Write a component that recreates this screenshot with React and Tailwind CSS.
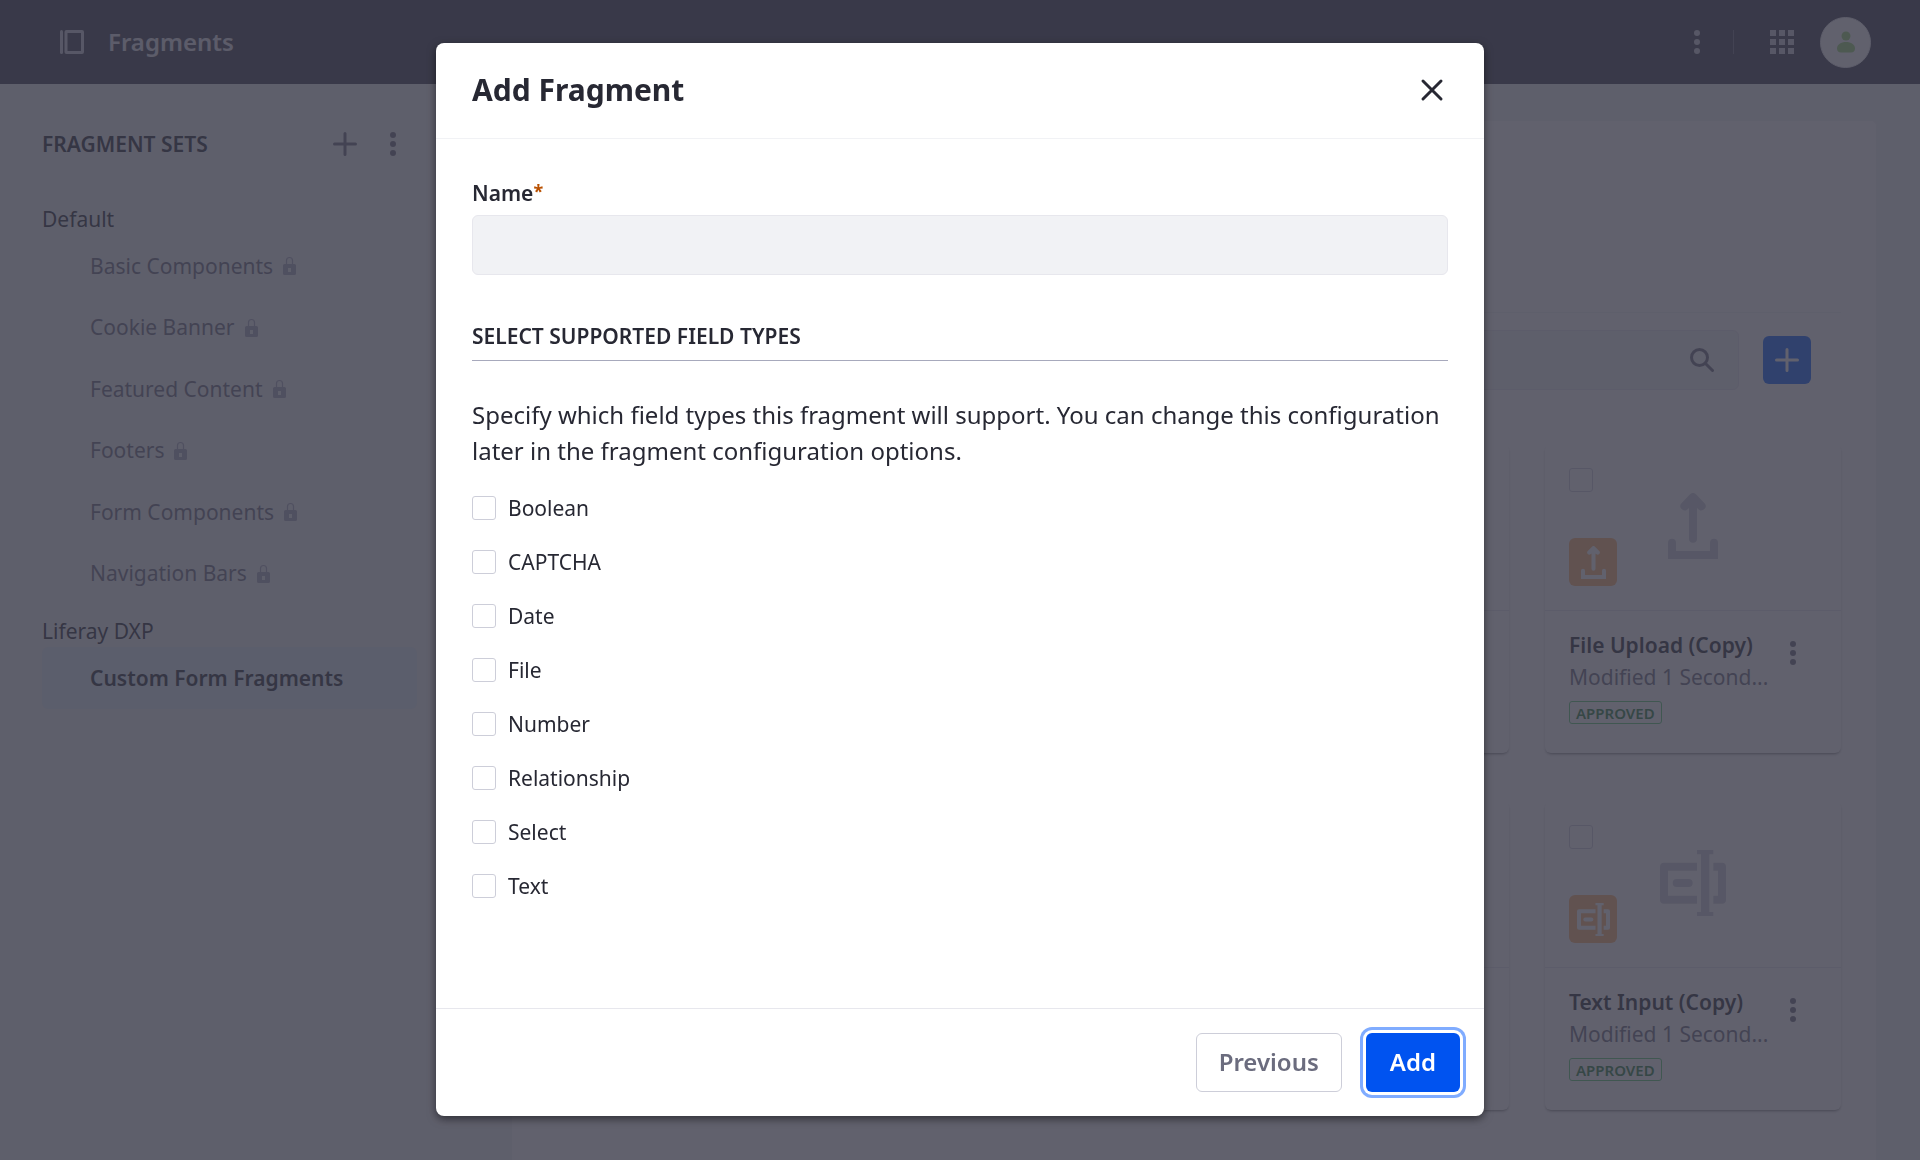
import React from "react";

const sets = [
  "Basic Components",
  "Cookie Banner",
  "Featured Content",
  "Footers",
  "Form Components",
  "Navigation Bars",
];

const fieldTypes = ["Boolean", "CAPTCHA", "Date", "File", "Number", "Relationship", "Select", "Text"];

const cards = [
  null,
  null,
  null,
  { name: "File Upload (Copy)", icon: UploadIcon },
  null,
  null,
  null,
  { name: "Text Input (Copy)", icon: TextInputIcon },
];

function UploadIcon({ className }) {
  return (
    <svg viewBox="0 0 198 198" className={className} fill="currentColor" aria-hidden="true">
      <path d="M90 4a13 13 0 0 1 18 0l27 28a13 13 0 0 1-18 18l-6-5v92a12 12 0 0 1-24 0V45l-6 5a13 13 0 0 1-18-18z" />
      <path d="M24 149a12 12 0 0 1 24 0v25h102v-25a12 12 0 0 1 24 0v49H24z" />
    </svg>
  );
}

function TextInputIcon({ className }) {
  return (
    <svg viewBox="0 0 198 198" className={className} fill="currentColor" aria-hidden="true">
      <path d="M12 38h99v24H24v75h87v24H12a12 12 0 0 1-12-12V50a12 12 0 0 1 12-12z" />
      <path d="M160 38h26a12 12 0 0 1 12 12v99a12 12 0 0 1-12 12h-26v-24h14V62h-14z" />
      <path d="M111 0h49v13h-12v173h12v12h-49v-12h12V13h-12z" />
      <rect x="38" y="87" width="60" height="24" rx="12" />
    </svg>
  );
}

function DotsIcon() {
  return (
    <svg viewBox="0 0 24 24" className="size-6" fill="currentColor" aria-hidden="true">
      <circle cx="12" cy="3" r="3" />
      <circle cx="12" cy="12" r="3" />
      <circle cx="12" cy="21" r="3" />
    </svg>
  );
}

function PlusIcon() {
  return (
    <svg viewBox="0 0 24 24" className="size-6" stroke="currentColor" strokeWidth="3" strokeLinecap="round" aria-hidden="true">
      <path d="M12 1.5v21M1.5 12h21" />
    </svg>
  );
}

function LockIcon() {
  return (
    <svg viewBox="0 0 13 19" className="h-[19px] w-[13px] shrink-0" aria-hidden="true">
      <path d="M3.5 9V4.5a3 3 0 0 1 6 0V9" fill="none" stroke="currentColor" strokeWidth="1.2" />
      <path fillRule="evenodd" fill="currentColor" d="M1.5 8h10A1.5 1.5 0 0 1 13 9.5v8a1.5 1.5 0 0 1-1.5 1.5h-10A1.5 1.5 0 0 1 0 17.5v-8A1.5 1.5 0 0 1 1.5 8zM5 12v4h3v-4z" />
    </svg>
  );
}

function Header() {
  return (
    <header className="flex h-[84px] shrink-0 items-center bg-[#393a4a] pr-[49px] pl-[60px] text-[#cdced9]">
      <button type="button" aria-label="Toggle product menu" className="mr-6">
        <svg viewBox="0 0 24 24" className="size-6" fill="none" stroke="currentColor" strokeWidth="3" aria-hidden="true">
          <path d="M1.5 1.5v21" strokeLinecap="round" />
          <rect x="6" y="1.5" width="16.5" height="21" rx="0.5" />
        </svg>
      </button>
      <h1 className="text-2xl font-semibold text-[#e7e7ed]">Fragments</h1>
      <div className="ml-auto flex items-center">
        <button type="button" aria-label="Options">
          <DotsIcon />
        </button>
        <span className="mx-6 h-6 w-px bg-[#6b6c7e]" />
        <button type="button" aria-label="Applications" className="ml-3">
          <svg viewBox="0 0 24 24" className="size-6" fill="currentColor" aria-hidden="true">
            <path d="M0 0h6v6H0zM9 0h6v6H9zM18 0h6v6h-6zM0 9h6v6H0zM9 9h6v6H9zM18 9h6v6h-6zM0 18h6v6H0zM9 18h6v6H9zM18 18h6v6h-6z" />
          </svg>
        </button>
        <button type="button" aria-label="User menu" className="ml-[26px] flex size-[51px] items-center justify-center rounded-full border border-[#e7e7ed] bg-white text-[#9bd675]">
          <svg viewBox="0 0 18 22" className="h-[22px] w-[18px]" fill="currentColor" aria-hidden="true">
            <circle cx="9" cy="5" r="4.5" />
            <path d="M0 17.5C0 13.5 4 11 9 11s9 2.5 9 6.5c0 2.5-1.5 4-4 4H4c-2.5 0-4-1.5-4-4z" />
          </svg>
        </button>
      </div>
    </header>
  );
}

function Sidebar() {
  return (
    <nav aria-label="Fragment sets" className="w-[417px] shrink-0 pt-9 pl-[42px] text-[21px] leading-8 text-[#272833]">
      <div className="mb-[27px] flex h-12 items-center">
        <h2 className="mr-auto font-semibold">FRAGMENT SETS</h2>
        <button type="button" aria-label="Add fragment set" className="flex size-12 items-center justify-center text-[#6b6c7e]">
          <PlusIcon />
        </button>
        <button type="button" aria-label="Fragment set options" className="flex size-12 items-center justify-center text-[#6b6c7e]">
          <DotsIcon />
        </button>
      </div>
      <div className="pt-2">Default</div>
      <ul className="grid h-[369px] auto-rows-fr">
        {sets.map((name) => (
          <li key={name} className="flex">
            <a href="#" className="flex flex-1 items-center gap-[10px] pl-12 text-[#6b6c7e]">
              {name}
              <span className="text-[#a7a9bc]">
                <LockIcon />
              </span>
            </a>
          </li>
        ))}
      </ul>
      <div className="mt-[11px]">Liferay DXP</div>
      <a href="#" aria-current="page" className="flex h-[62px] items-center rounded-md bg-[#dfedf7] pl-12 font-semibold">
        Custom Form Fragments
      </a>
    </nav>
  );
}

function Card({ item }) {
  const Icon = item?.icon;
  return (
    <article className="h-[309px] rounded-md bg-white shadow-[0_2px_3px_-1px_rgba(0,0,0,0.5)]">
      <div className="relative flex h-[167px] items-center justify-center border-b border-[#e7e7ed] pb-0.5 text-[#cdced9]">
        {item && (
          <>
            <Icon className="size-[66px]" />
            <input type="checkbox" aria-label={`Select ${item.name}`} className="absolute top-6 left-6 size-6 appearance-none rounded-[3px] border border-[#cdced9]" />
            <span className="absolute bottom-6 left-6 flex size-12 items-center justify-center rounded-md bg-[#ffb46e] text-white">
              <Icon className="size-[33px]" />
            </span>
          </>
        )}
      </div>
      {item && (
        <div className="flex px-6 pt-[18px] text-[21px] leading-8">
          <div className="min-w-0 flex-1">
            <h3 className="font-semibold whitespace-nowrap text-[#272833]">{item.name}</h3>
            <p className="whitespace-nowrap text-[#6b6c7e]">Modified 1 Second...</p>
            <span className="mt-2 flex h-[23px] w-fit items-center rounded-[3px] border border-[#5aca75] px-1.5 text-[15px] font-semibold text-[#287d3c]">
              APPROVED
            </span>
          </div>
          <button type="button" aria-label={`${item.name} actions`} className="flex size-12 items-center justify-center text-[#6b6c7e]">
            <DotsIcon />
          </button>
        </div>
      )}
    </article>
  );
}

function Content() {
  return (
    <main className="mt-9 mr-[43px] ml-[94px] min-w-0 flex-1 rounded-t-md border border-b-0 border-[#f1f2f5] bg-white pr-[35px] pl-[37px]">
      <div className="h-[192px] border-b border-[#f1f2f5]" />
      <div className="flex items-center gap-6 pt-[17px] pr-[30px]">
        <div className="flex h-[60px] flex-1 items-center rounded-md border border-[#e7e7ed] bg-[#f1f2f5] pr-6">
          <input type="search" aria-label="Search fragments" className="h-full min-w-0 flex-1 bg-transparent px-6 outline-none" />
          <button type="button" aria-label="Search" className="text-[#6b6c7e]">
            <svg viewBox="0 0 24 24" className="size-6" fill="none" stroke="currentColor" strokeWidth="3" strokeLinecap="round" aria-hidden="true">
              <circle cx="9.5" cy="9.5" r="8" />
              <path d="M16 16l6.5 6.5" />
            </svg>
          </button>
        </div>
        <button type="button" aria-label="Add fragment" className="flex size-12 items-center justify-center rounded-md bg-[#0b5fff] text-white">
          <PlusIcon />
        </button>
      </div>
      <div className="mt-[54px] grid grid-cols-4 gap-x-9 gap-y-12">
        {cards.map((item, i) => (
          <Card key={i} item={item} />
        ))}
      </div>
    </main>
  );
}

function AddFragmentModal() {
  return (
    <div className="fixed inset-0 flex items-center justify-center bg-[#3a3949]/80 pb-0.5">
      <div role="dialog" aria-modal="true" aria-labelledby="dialog-title" className="flex max-h-full w-full max-w-[1048px] flex-col rounded-lg bg-white text-[21px] leading-8 text-[#272833] shadow-[0_3px_8px_rgba(0,0,0,0.5)]">
        <header className="flex h-24 shrink-0 items-center justify-between border-b border-[#f1f2f5] pr-7 pl-9">
          <h2 id="dialog-title" className="text-3xl font-bold">
            Add Fragment
          </h2>
          <button type="button" aria-label="Close" className="flex size-12 items-center justify-center">
            <svg viewBox="0 0 24 24" className="size-6" stroke="currentColor" strokeWidth="3" strokeLinecap="round" aria-hidden="true">
              <path d="M3 3l18 18M21 3L3 21" />
            </svg>
          </button>
        </header>
        <form className="px-9 pt-[38px] pb-[106px]">
          <label htmlFor="fragment-name" className="mb-1.5 flex font-semibold">
            Name
            <span className="text-lg leading-7 font-bold text-[#b95000]">*</span>
          </label>
          <input id="fragment-name" type="text" required className="block h-[60px] w-full rounded-md border border-[#e7e7ed] bg-[#f1f2f5] px-6 outline-none" />
          <fieldset className="mt-[45px]">
            <legend className="w-full border-b border-[#a7a9bc] pb-2 font-semibold">SELECT SUPPORTED FIELD TYPES</legend>
            <p className="pt-9 text-2xl leading-9">
              Specify which field types this fragment will support. You can change this configuration later in the fragment configuration options.
            </p>
            <div className="mt-[23px] flex flex-col gap-[22px]">
              {fieldTypes.map((type) => (
                <label key={type} className="flex w-fit items-center gap-3">
                  <input type="checkbox" className="size-6 shrink-0 appearance-none rounded-[3px] border border-[#cdced9] bg-white" />
                  {type}
                </label>
              ))}
            </div>
          </fieldset>
        </form>
        <footer className="flex justify-end gap-6 border-t border-[#e7e7ed] p-6 text-2xl font-semibold">
          <button type="button" className="h-[59px] rounded-md border border-[#cdced9] bg-white px-[22px] text-[#6b6c7e]">
            Previous
          </button>
          <button type="button" className="h-[59px] rounded-md bg-[#0053f0] px-6 text-white ring-3 ring-[#80acff] ring-offset-3 ring-offset-white">
            Add
          </button>
        </footer>
      </div>
    </div>
  );
}

export default function App() {
  return (
    <div className="flex h-screen flex-col overflow-hidden bg-[#f1f2f5] font-['Noto_Sans',sans-serif]">
      <Header />
      <div className="flex flex-1">
        <Sidebar />
        <Content />
      </div>
      <AddFragmentModal />
    </div>
  );
}
